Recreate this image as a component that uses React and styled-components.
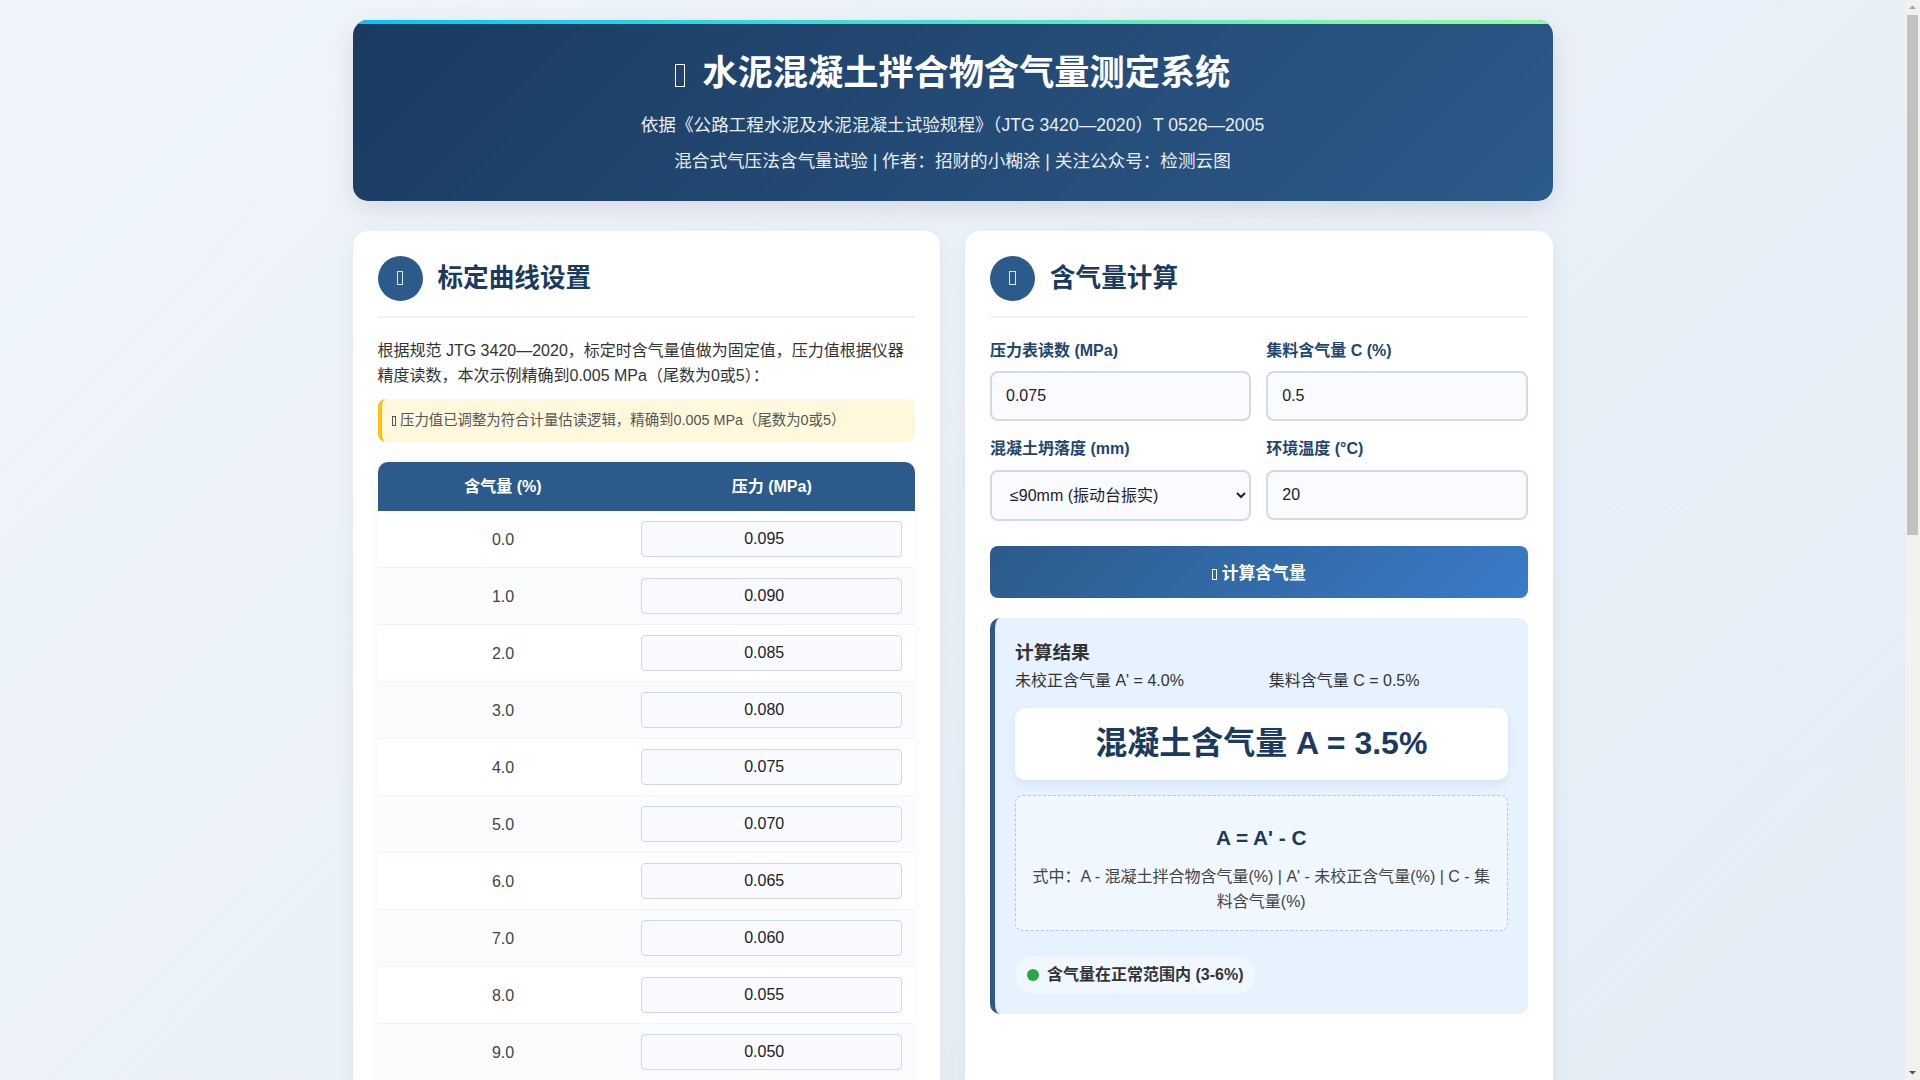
import React from "react";
import styled, { createGlobalStyle } from "styled-components";

const FONT = `"Liberation Sans", "Noto Sans CJK SC", sans-serif`;

const Global = createGlobalStyle`
  * { box-sizing: border-box; margin: 0; padding: 0; }
  html, body { height: 100%; overflow: hidden; }
  body {
    font-family: ${FONT};
    color: #333;
    line-height: 1.6;
  }
`;

const Frame = styled.div`
  display: flex;
  height: 100vh;
`;

const Scroller = styled.div`
  flex: 1;
  min-width: 0;
  overflow-y: scroll;
  scrollbar-width: none;
  padding: 20px;
  background: linear-gradient(135deg, #f0f5fc 0%, #e5ecf5 100%);
`;

const ScrollBar = styled.aside`
  flex: none;
  width: 15px;
  display: flex;
  flex-direction: column;
  background: #f1f1f1;
`;

const ScrollArrow = styled.svg`
  flex: none;
  display: block;
  width: 15px;
  height: 15px;
`;

const ScrollTrack = styled.div`
  flex: 1;
  padding: 0 2px;
`;

const ScrollThumb = styled.div`
  height: 520px;
  background: #c1c1c1;
`;

const Container = styled.div`
  max-width: 1200px;
  min-height: 2140px;
  margin: 0 auto;
  display: flex;
  flex-direction: column;
`;

const Tofu = styled.span`
  display: inline-block;
  width: 0.284em;
  height: 0.65em;
  border: 1px solid currentColor;
  vertical-align: -0.06em;
  margin-right: ${(p) => p.$gap || "0.03em"};
`;

const Header = styled.header`
  position: relative;
  overflow: hidden;
  background: linear-gradient(135deg, #1a3a5f, #2c5a8a);
  color: #fff;
  text-align: center;
  border-radius: 15px;
  padding: 25px;
  margin-bottom: 30px;
  box-shadow: 0 8px 25px rgba(0, 0, 0, 0.1);
  &::before {
    content: "";
    position: absolute;
    top: 0;
    left: 0;
    right: 0;
    height: 4px;
    background: linear-gradient(90deg, #00c6ff, #92fe9d);
  }
`;

const Title = styled.h1`
  font-size: 35.2px;
  font-weight: 700;
  margin-bottom: 10px;
`;

const Subtitle = styled.p`
  font-size: 17.6px;
  opacity: 0.9;
  & + & { margin-top: 8px; }
`;

const Columns = styled.main`
  flex: 1;
  display: grid;
  grid-template-columns: 1fr 1fr;
  gap: 25px;
`;

const Panel = styled.section`
  background: #fff;
  border-radius: 15px;
  padding: 25px;
  box-shadow: 0 5px 20px rgba(0, 0, 0, 0.06);
`;

const PanelHead = styled.div`
  display: flex;
  align-items: center;
  gap: 15px;
  padding-bottom: 15px;
  margin-bottom: 20px;
  border-bottom: 2px solid #eef2f7;
`;

const IconCircle = styled.div`
  width: 45px;
  height: 45px;
  flex: none;
  border-radius: 50%;
  background: #2c5a8a;
  color: #dbe6f2;
  font-size: 22.4px;
  display: flex;
  align-items: center;
  justify-content: center;
`;

const PanelTitle = styled.h2`
  font-size: 25.6px;
  font-weight: 700;
  color: #1a3a5f;
`;

const Intro = styled.p`
  margin-bottom: 10px;
`;

const Note = styled.div`
  font-size: 14.4px;
  color: #555;
  background: #fff8dc;
  border-left: 4px solid #ffc107;
  border-radius: 8px;
  padding: 10px;
  margin-bottom: 20px;
`;

const TableWrap = styled.div`
  border-radius: 10px;
  overflow: hidden;
  box-shadow: 0 2px 10px rgba(0, 0, 0, 0.04);
`;

const Table = styled.table`
  width: 100%;
  table-layout: fixed;
  border-collapse: collapse;
`;

const ColFirst = styled.col`
  width: 251px;
`;

const HeadCell = styled.th`
  background: #2c5a8a;
  color: #fff;
  font-size: 16px;
  font-weight: 700;
  padding: 12px;
  text-align: center;
`;

const Row = styled.tr`
  border-bottom: 1px solid #f0f4fa;
  &:nth-child(even) { background: #f9fbfd; }
`;

const Cell = styled.td`
  padding: 10px 12.8px;
  text-align: center;
  color: #444;
`;

const PressureInput = styled.input`
  display: block;
  width: 100%;
  padding: 8px;
  font: 16px ${FONT};
  text-align: center;
  color: #222;
  background: #f8faff;
  border: 1px solid #cfd8e8;
  border-radius: 4px;
`;

const FormGrid = styled.div`
  display: grid;
  grid-template-columns: 1fr 1fr;
  gap: 15px;
  margin-bottom: 25px;
`;

const Field = styled.div`
  display: flex;
  flex-direction: column;
`;

const Label = styled.label`
  font-weight: 700;
  color: #204670;
  margin-bottom: 8px;
`;

const TextInput = styled.input`
  width: 100%;
  padding: 14px;
  font: 16px ${FONT};
  color: #222;
  background: #f9fbff;
  border: 2px solid #d1dbe8;
  border-radius: 8px;
`;

const Select = styled.select`
  width: 100%;
  padding: 14px;
  font: 16px ${FONT};
  color: #222;
  background: #f9fbff;
  border: 2px solid #d1dbe8;
  border-radius: 8px;
`;

const CalcButton = styled.button`
  display: block;
  width: 100%;
  padding: 14px;
  font: 700 16.8px ${FONT};
  color: #fff;
  background: linear-gradient(135deg, #2c5a8a, #3a7bc8);
  border: none;
  border-radius: 8px;
  cursor: pointer;
`;

const Result = styled.div`
  margin-top: 20px;
  padding: 20px;
  background: #e6f2ff;
  border-left: 5px solid #2c5a8a;
  border-radius: 10px;
`;

const ResultTitle = styled.h3`
  font-size: 18.72px;
  font-weight: 700;
  color: #333;
`;

const ResultGrid = styled.div`
  display: grid;
  grid-template-columns: 1fr 1fr;
  gap: 15px;
  margin-bottom: 15px;
`;

const ResultValue = styled.div`
  font-size: 32px;
  font-weight: 700;
  color: #1a3a5f;
  text-align: center;
  background: #fff;
  border-radius: 10px;
  padding: 10px;
  box-shadow: 0 4px 10px rgba(26, 58, 95, 0.08);
  margin-bottom: 15px;
`;

const FormulaBox = styled.div`
  text-align: center;
  background: #f0f7ff;
  border: 1px dashed #a8c8f0;
  border-radius: 8px;
  padding: 15px;
  margin-bottom: 25px;
`;

const Formula = styled.div`
  font-size: 20.8px;
  font-weight: 700;
  color: #1a3a5f;
  margin: 10px 0;
`;

const FormulaNote = styled.p`
  color: #444;
`;

const Status = styled.div`
  display: inline-flex;
  align-items: center;
  gap: 8px;
  padding: 6px 12px;
  font-weight: 700;
  background: #f0f7ff;
  border-radius: 20px;
`;

const Dot = styled.span`
  width: 12px;
  height: 12px;
  border-radius: 50%;
  background: #28a745;
`;

const StatusLine = styled.div`
  display: flex;
`;

const rows = [
  ["0.0", "0.095"], ["1.0", "0.090"], ["2.0", "0.085"], ["3.0", "0.080"],
  ["4.0", "0.075"], ["5.0", "0.070"], ["6.0", "0.065"], ["7.0", "0.060"],
  ["8.0", "0.055"], ["9.0", "0.050"], ["10.0", "0.045"],
];

export default function App() {
  return (
    <Frame>
      <Global />
      <Scroller>
        <Container>
          <Header>
            <Title><Tofu $gap="8px" /> 水泥混凝土拌合物含气量测定系统</Title>
            <Subtitle>依据《公路工程水泥及水泥混凝土试验规程》（JTG 3420—2020）T 0526—2005</Subtitle>
            <Subtitle>混合式气压法含气量试验 | 作者：招财的小糊涂 | 关注公众号：检测云图</Subtitle>
          </Header>
          <Columns>
            <Panel>
              <PanelHead>
                <IconCircle><Tofu $gap="0" /></IconCircle>
                <PanelTitle>标定曲线设置</PanelTitle>
              </PanelHead>
              <Intro>根据规范 JTG 3420—2020，标定时含气量值做为固定值，压力值根据仪器精度读数，本次示例精确到0.005 MPa（尾数为0或5）：</Intro>
              <Note><Tofu /> 压力值已调整为符合计量估读逻辑，精确到0.005 MPa（尾数为0或5）</Note>
              <TableWrap>
                <Table>
                  <colgroup>
                    <ColFirst />
                    <col />
                  </colgroup>
                  <thead>
                    <tr>
                      <HeadCell>含气量 (%)</HeadCell>
                      <HeadCell>压力 (MPa)</HeadCell>
                    </tr>
                  </thead>
                  <tbody>
                    {rows.map(([air, pressure]) => (
                      <Row key={air}>
                        <Cell>{air}</Cell>
                        <Cell>
                          <PressureInput type="number" step="0.005" defaultValue={pressure} />
                        </Cell>
                      </Row>
                    ))}
                  </tbody>
                </Table>
              </TableWrap>
            </Panel>
            <Panel>
              <PanelHead>
                <IconCircle><Tofu $gap="0" /></IconCircle>
                <PanelTitle>含气量计算</PanelTitle>
              </PanelHead>
              <FormGrid>
                <Field>
                  <Label>压力表读数 (MPa)</Label>
                  <TextInput type="number" defaultValue="0.075" />
                </Field>
                <Field>
                  <Label>集料含气量 C (%)</Label>
                  <TextInput type="number" defaultValue="0.5" />
                </Field>
                <Field>
                  <Label>混凝土坍落度 (mm)</Label>
                  <Select defaultValue="a">
                    <option value="a">≤90mm (振动台振实)</option>
                    <option value="b">&gt;90mm (捣棒捣实)</option>
                  </Select>
                </Field>
                <Field>
                  <Label>环境温度 (°C)</Label>
                  <TextInput type="number" defaultValue="20" />
                </Field>
              </FormGrid>
              <CalcButton><Tofu /> 计算含气量</CalcButton>
              <Result>
                <ResultTitle>计算结果</ResultTitle>
                <ResultGrid>
                  <div>未校正含气量 A' = 4.0%</div>
                  <div>集料含气量 C = 0.5%</div>
                </ResultGrid>
                <ResultValue>混凝土含气量 A = 3.5%</ResultValue>
                <FormulaBox>
                  <Formula>A = A' - C</Formula>
                  <FormulaNote>式中：A - 混凝土拌合物含气量(%) | A' - 未校正含气量(%) | C - 集料含气量(%)</FormulaNote>
                </FormulaBox>
                <StatusLine>
                  <Status>
                    <Dot />
                    含气量在正常范围内 (3-6%)
                  </Status>
                </StatusLine>
              </Result>
            </Panel>
          </Columns>
        </Container>
      </Scroller>
      <ScrollBar>
        <ScrollArrow viewBox="0 0 15 15"><polygon points="7.5,5.5 11,9 4,9" fill="#a3a3a3" /></ScrollArrow>
        <ScrollTrack><ScrollThumb /></ScrollTrack>
        <ScrollArrow viewBox="0 0 15 15"><polygon points="4,6 11,6 7.5,9.5" fill="#505050" /></ScrollArrow>
      </ScrollBar>
    </Frame>
  );
}
